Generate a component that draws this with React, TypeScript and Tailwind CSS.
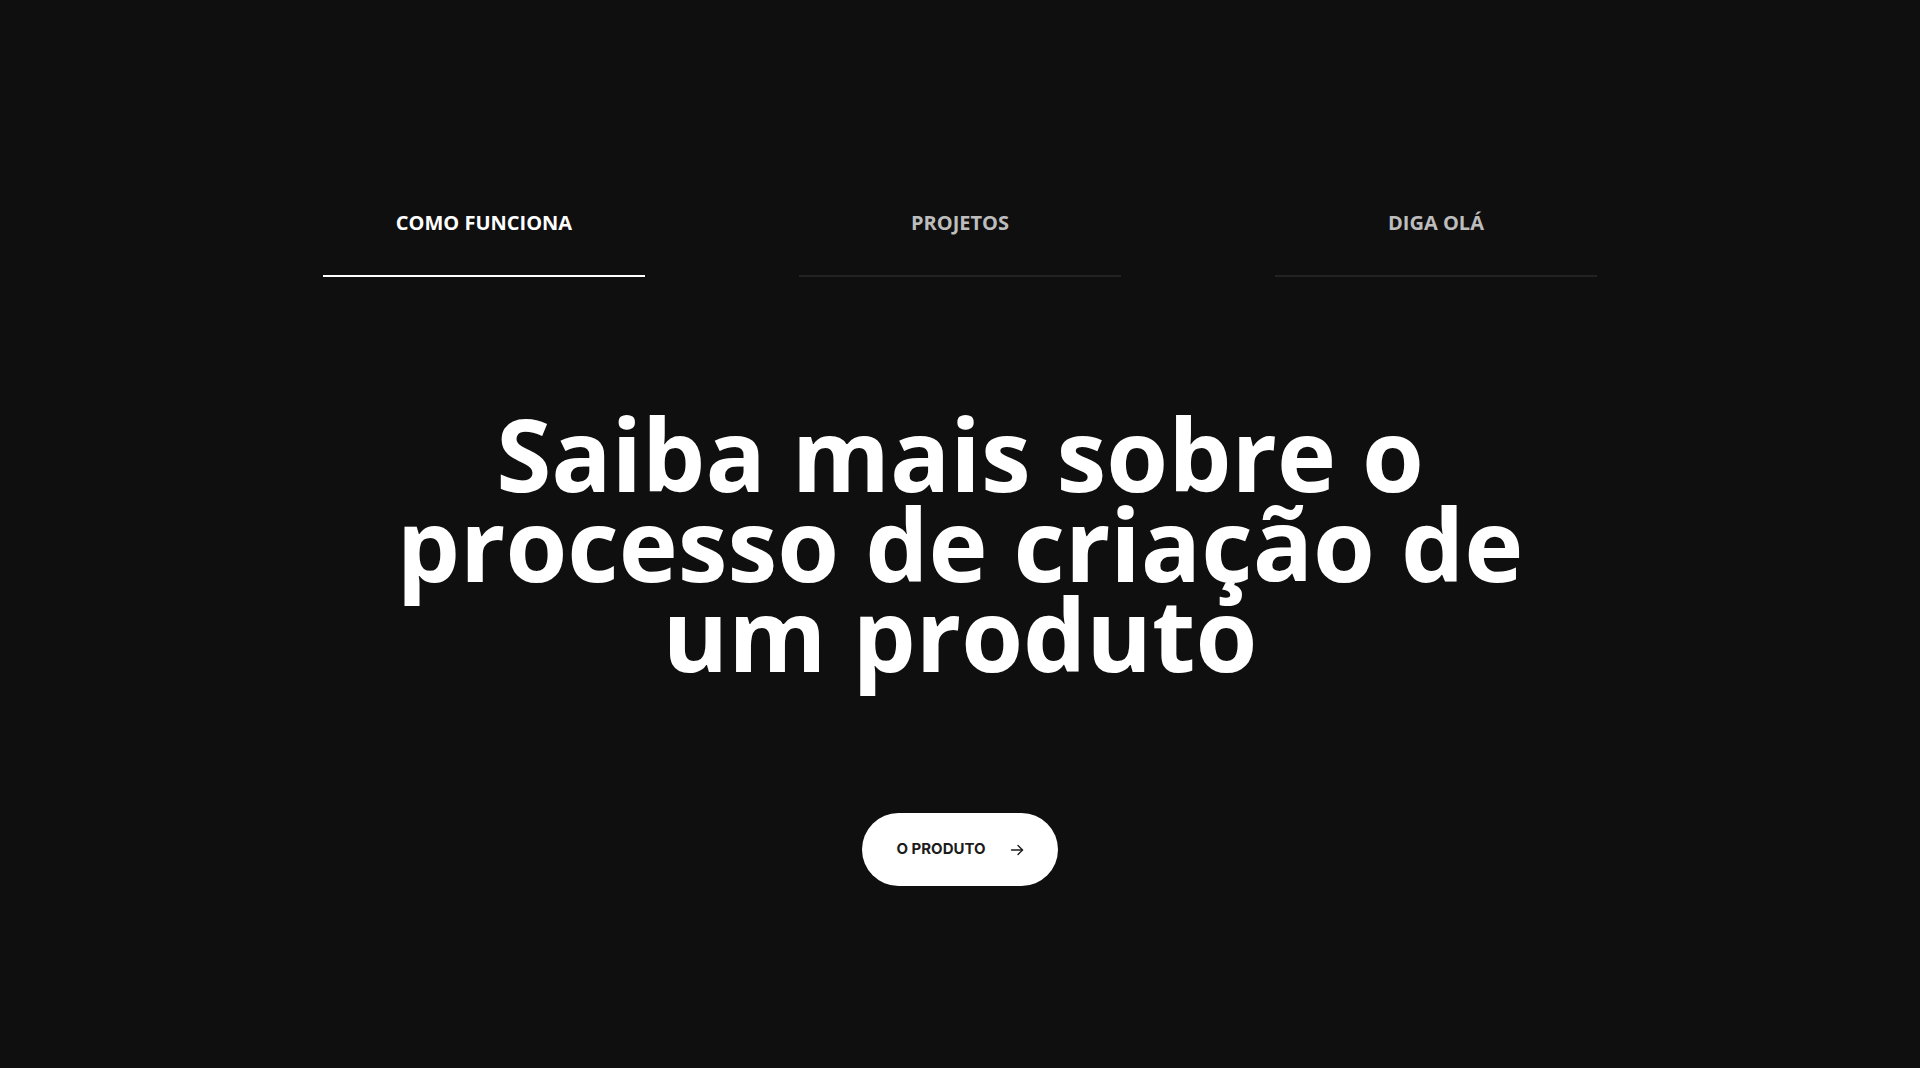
import React from 'react';

const tabs = [
  { label: 'COMO FUNCIONA', active: true },
  { label: 'PROJETOS', active: false },
  { label: 'DIGA OLÁ', active: false },
];

function ArrowRight() {
  return (
    <svg width="14" height="14" viewBox="0 0 14 14" fill="none" stroke="currentColor" strokeWidth="1.4" strokeLinecap="round" strokeLinejoin="round">
      <path d="M1.5 7h11" />
      <path d="M8 2.5 12.5 7 8 11.5" />
    </svg>
  );
}

export default function App() {
  return (
    <div className="min-h-[1068px] w-full bg-[#0f0f0f] flex flex-col items-center pt-[208px]" style={{ fontFamily: '"Open Sans", sans-serif' }}>
      <nav className="flex gap-[154px]">
        {tabs.map((t) => (
          <div
            key={t.label}
            className={
              'w-[322px] flex justify-center pb-[37px] border-b-2 ' +
              (t.active ? 'border-white' : 'border-[#232323]')
            }
          >
            <span className={'text-[20px] leading-[30px] font-bold ' + (t.active ? 'text-white' : 'text-[#bdbdbd]')}>
              {t.label}
            </span>
          </div>
        ))}
      </nav>

      <h1 className="mt-[131px] text-center text-white font-bold text-[100px] leading-[90px]">
        Saiba mais sobre o
        <br />
        processo de criação de
        <br />
        um produto
      </h1>

      <button
        className="mt-[135px] h-[73px] w-[196px] rounded-full bg-white text-[#1c1c1c] flex items-center justify-center gap-[24px]"
        style={{ fontFamily: 'Inter, sans-serif' }}
      >
        <span className="text-[15px] font-bold">O PRODUTO</span>
        <ArrowRight />
      </button>
    </div>
  );
}
